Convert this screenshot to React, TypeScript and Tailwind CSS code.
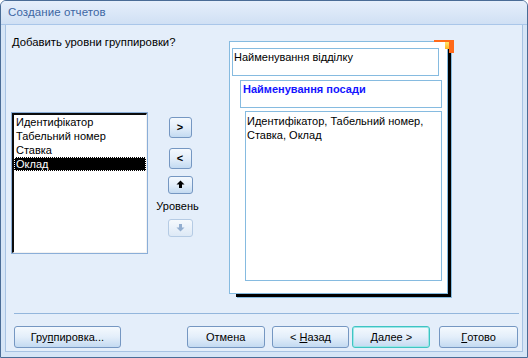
import React from "react";

const font = { fontFamily: '"Liberation Sans", Arial, sans-serif' };

function Btn({
  children,
  className = "",
  focus = false,
  disabled = false,
}: {
  children: React.ReactNode;
  className?: string;
  focus?: boolean;
  disabled?: boolean;
}) {
  return (
    <div
      className={
        "flex items-center justify-center rounded-[3px] border text-[11px] text-black whitespace-pre " +
        (disabled
          ? "border-[#b5cbe4] bg-gradient-to-b from-[#f5f9fd] to-[#dde9f6] "
          : focus
          ? "border-[#3fc4c4] shadow-[inset_0_0_0_1px_#9ce6e6] bg-gradient-to-b from-[#f4f9fe] via-[#e3eefa] to-[#c3daf1] "
          : "border-[#7597c2] bg-gradient-to-b from-[#f4f9fe] via-[#e3eefa] to-[#c3daf1] ") +
        className
      }
    >
      {children}
    </div>
  );
}

const items = ["Идентифікатор", "Табельний номер", "Ставка", "Оклад"];

export default function App() {
  return (
    <div
      style={font}
      className="w-[528px] h-[358px] flex flex-col bg-[#d6e5f6] border border-[#4a6c96] rounded-t-[6px] overflow-hidden"
    >
      {/* title bar */}
      <div className="h-[24px] shrink-0 flex items-center pl-[7px] bg-gradient-to-b from-[#e6effb] to-[#d0e0f4] border-b border-[#a9c6e9]">
        <span className="text-[11.5px] text-[#3d66a3] tracking-[0.1px]">Создание отчетов</span>
      </div>

      {/* body */}
      <div className="flex-1 mx-[4px] mb-[5px] bg-[#e4eefa] border-l border-r border-b border-[#a7c2e2] flex flex-col">
        <div className="flex h-[289px] border-b border-[#93b6dc] ml-[8px] mr-[3px]">
          {/* left column */}
          <div className="w-[215px] shrink-0 flex flex-col">
            <div className="text-[11.3px] text-black mt-[9px] -ml-[2px]">Добавить уровни группировки?</div>
            <div className="flex mt-[61px] -ml-[3px]">
              {/* list */}
              <div className="w-[137px] h-[142px] border border-[#8aaed8] bg-white">
                <div className="w-full h-full border-l-2 border-t-2 border-[#0c0c0c] border-r border-b border-r-[#f2f2f2] border-b-[#f2f2f2] flex flex-col">
                  {items.map((it, i) => (
                    <div
                      key={it}
                      className={
                        "h-[14px] leading-[14px] pl-[2px] text-[11px] " +
                        (i === 3
                          ? "bg-black text-white outline-1 outline-dotted outline-white -outline-offset-1"
                          : "text-black")
                      }
                    >
                      {it}
                    </div>
                  ))}
                </div>
              </div>

              {/* move buttons */}
              <div className="w-[64px] flex flex-col items-center pt-[5px]">
                <Btn className="w-[23px] h-[21px] font-bold">&gt;</Btn>
                <Btn className="w-[23px] h-[21px] mt-[10px] font-bold">&lt;</Btn>
                <Btn className="w-[25px] h-[18px] mt-[7px]">
                  <svg width="9" height="9" viewBox="0 0 9 9">
                    <path d="M4.5 0.5 L8.5 4.5 L6 4.5 L6 8 L3 8 L3 4.5 L0.5 4.5 Z" fill="#000" />
                  </svg>
                </Btn>
                <div className="text-[11px] leading-[14px] text-black mt-[5px] -ml-[5px]">Уровень</div>
                <Btn disabled className="w-[25px] h-[18px] mt-[6px]">
                  <svg width="9" height="9" viewBox="0 0 9 9">
                    <path d="M4.5 8.5 L8.5 4.5 L6 4.5 L6 1 L3 1 L3 4.5 L0.5 4.5 Z" fill="#93aed0" />
                  </svg>
                </Btn>
              </div>
            </div>
          </div>

          {/* preview page */}
          <div className="pt-[16px]">
            <div className="relative w-[219px] h-[253px] bg-white border border-[#86bbe0] shadow-[5px_5px_0_-2px_#000,6px_6px_0_-2px_#86bbe0] flex flex-col">
              <div className="absolute -top-[2px] -right-[7px] w-[20px] h-[13px] border-t-2 border-r-[5px] border-[#ff6a1a]">
                <div className="absolute top-0 right-0 w-[4px] h-[7px] bg-gradient-to-b from-[#ffe86a] to-[#ffb21a]" />
              </div>
              <div className="ml-[2px] mt-[6px] w-[207px] h-[28px] border border-[#86bbe0] text-[11px] text-black pl-[1px] pt-[1px] leading-[14px]">
                Найменування відділку
              </div>
              <div className="ml-[10px] mt-[4px] w-[202px] h-[28px] border border-[#86bbe0] text-[11px] font-bold text-[#1414ff] pl-[2px] pt-[1px] leading-[14px]">
                Найменування посади
              </div>
              <div className="ml-[15px] mt-[3px] w-[197px] h-[170px] border border-[#86bbe0] text-[11px] text-black pl-[1px] pt-[2px] leading-[14px]">
                Идентифікатор, Табельний номер,
                <br />
                Ставка, Оклад
              </div>
            </div>
          </div>
        </div>

        {/* bottom buttons */}
        <div className="flex mt-[12px] ml-[8px] mr-[4px]">
          <Btn className="w-[107px] h-[22px]">
            Гру<span className="underline">п</span>пировка...
          </Btn>
          <Btn className="w-[78px] h-[22px] ml-[66px]">Отмена</Btn>
          <Btn className="w-[78px] h-[22px] ml-[7px]">
            {"< "}
            <span className="underline">Н</span>азад
          </Btn>
          <Btn focus className="w-[78px] h-[22px] ml-[3px]">
            <span className="underline">Д</span>
            {"алее >"}
          </Btn>
          <Btn className="w-[79px] h-[22px] ml-[9px]">
            <span className="underline">Г</span>отово
          </Btn>
        </div>
      </div>
    </div>
  );
}
